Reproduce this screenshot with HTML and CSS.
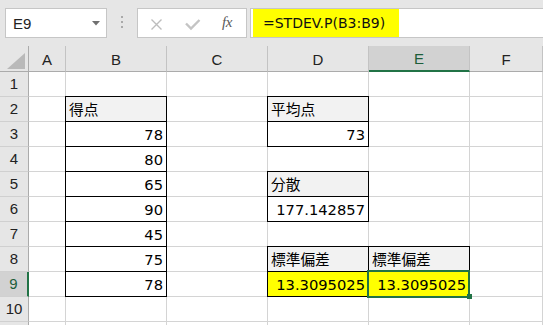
FILE: index.html
```html
<!DOCTYPE html>
<html lang="ja">
<head>
<meta charset="utf-8">
<title>STDEV.P</title>
<link rel="stylesheet" href="styles.css">
</head>
<body>
<div class="bar">
  <div class="namebox"><span class="ref">E9</span><svg class="drop" width="8" height="5" viewBox="0 0 8 5"><path d="M0 0H8L4 4.5Z" fill="#707070"/></svg></div>
  <div class="grip"><i></i><i></i><i></i></div>
  <div class="btns">
    <svg class="ico" width="70" height="28" viewBox="0 0 70 28">
      <path d="M13.5 10.5L23.5 20.5M23.5 10.5L13.5 20.5" stroke="#bdbdbd" stroke-width="1.4" fill="none"/>
      <path d="M48 14.5L53 19.5L61.5 11" stroke="#c4c4c4" stroke-width="2.4" fill="none"/>
    </svg>
    <span class="fx">fx</span>
  </div>
  <div class="formula"><span class="hl">=STDEV.P(B3:B9)</span></div>
</div>

<div class="sheet">
  <div class="corner"><svg width="18" height="16" viewBox="0 0 18 16"><path d="M18 0V16H0Z" fill="#b9b9b9"/></svg></div>
  <div class="ch">A</div><div class="ch">B</div><div class="ch">C</div><div class="ch">D</div><div class="ch csel">E</div><div class="ch">F</div>

  <div class="rh">1</div><div class="c"></div><div class="c"></div><div class="c"></div><div class="c"></div><div class="c"></div><div class="c"></div>
  <div class="rh">2</div><div class="c"></div><div class="c t h">得点</div><div class="c"></div><div class="c t h">平均点</div><div class="c"></div><div class="c"></div>
  <div class="rh">3</div><div class="c"></div><div class="c t r">78</div><div class="c"></div><div class="c t r">73</div><div class="c"></div><div class="c"></div>
  <div class="rh">4</div><div class="c"></div><div class="c t r">80</div><div class="c"></div><div class="c"></div><div class="c"></div><div class="c"></div>
  <div class="rh">5</div><div class="c"></div><div class="c t r">65</div><div class="c"></div><div class="c t h">分散</div><div class="c"></div><div class="c"></div>
  <div class="rh">6</div><div class="c"></div><div class="c t r">90</div><div class="c"></div><div class="c t r">177.142857</div><div class="c"></div><div class="c"></div>
  <div class="rh">7</div><div class="c"></div><div class="c t r">45</div><div class="c"></div><div class="c"></div><div class="c"></div><div class="c"></div>
  <div class="rh">8</div><div class="c"></div><div class="c t r">75</div><div class="c"></div><div class="c t h">標準偏差</div><div class="c t h">標準偏差</div><div class="c"></div>
  <div class="rh rsel">9</div><div class="c"></div><div class="c t r">78</div><div class="c"></div><div class="c t r y">13.3095025</div><div class="c t r y sel">13.3095025<span class="handle"></span></div><div class="c"></div>
  <div class="rh">10</div><div class="c"></div><div class="c"></div><div class="c"></div><div class="c"></div><div class="c"></div><div class="c"></div>
  <div class="rh"></div><div class="c"></div><div class="c"></div><div class="c"></div><div class="c"></div><div class="c"></div><div class="c"></div>
</div>
</body>
</html>
```

FILE: styles.css
```css
html, body {
  margin: 0;
  padding: 0;
}
body {
  width: 543px;
  height: 325px;
  overflow: hidden;
  background: #e6e6e6;
  font-family: "DejaVu Sans", "Noto Sans CJK JP", sans-serif;
  color: #000;
}

/* ---------- formula bar ---------- */
.bar {
  display: flex;
  box-sizing: border-box;
  height: 38px;
  padding-top: 8px;
  border-top: 2px solid #dcdcdc;
  margin-top: -2px;
}
.namebox {
  box-sizing: border-box;
  width: 102px;
  height: 30px;
  margin-left: 5px;
  background: #fff;
  border: 1px solid #c6c6c6;
  display: flex;
  align-items: center;
  justify-content: space-between;
  padding: 0 6px 0 7px;
}
.ref {
  font-family: "Liberation Sans", sans-serif;
  font-size: 15px;
  color: #222;
}
.drop {
  margin-top: 1px;
}
.grip {
  width: 30px;
  display: flex;
  flex-direction: column;
  align-items: center;
  justify-content: center;
  gap: 3px;
}
.grip i {
  display: block;
  width: 2px;
  height: 2px;
  background: #a9a9a9;
}
.btns {
  box-sizing: border-box;
  width: 110px;
  height: 30px;
  background: #fff;
  border: 1px solid #c6c6c6;
  display: flex;
  align-items: flex-start;
}
.ico {
  display: block;
}
.fx {
  margin-left: 14px;
  margin-top: 5px;
  font-family: "Liberation Serif", serif;
  font-style: italic;
  font-size: 15px;
  color: #5a5a5a;
  letter-spacing: -0.5px;
}
.formula {
  flex: 1;
  box-sizing: border-box;
  height: 30px;
  margin-left: 3px;
  background: #fff;
  border: 1px solid #c6c6c6;
  border-right: none;
  padding-left: 2px;
  display: flex;
}
.hl {
  background: #ffff00;
  height: 28px;
  padding: 0 14px 0 10px;
  display: flex;
  align-items: center;
  font-size: 14px;
  color: #111;
}

/* ---------- sheet ---------- */
.sheet {
  margin-top: 10px;
  display: grid;
  grid-template-columns: 29px 37px 101px 101px 101px 101px 1fr;
  grid-template-rows: 26px repeat(11, 25px);
  font-size: 14.7px;
}
.sheet > div {
  box-sizing: border-box;
}
.corner {
  border-right: 1px solid #ababab;
  border-bottom: 1px solid #ababab;
  display: flex;
  align-items: flex-end;
  justify-content: flex-end;
  padding: 0 3px 2px 0;
}
.corner svg {
  display: block;
}
.ch {
  border-right: 1px solid #c3c3c3;
  border-bottom: 1px solid #ababab;
  display: flex;
  align-items: center;
  justify-content: center;
  font-family: "Liberation Sans", sans-serif;
  font-size: 15px;
  color: #222;
  padding-top: 1px;
}
.ch.csel {
  background: #d2d2d2;
  border-bottom: 2px solid #217346;
  color: #1d5e3a;
}
.rh {
  border-right: 1px solid #ababab;
  border-bottom: 1px solid #d0d0d0;
  display: flex;
  align-items: flex-end;
  justify-content: center;
  font-family: "Liberation Sans", sans-serif;
  font-size: 15px;
  line-height: 18px;
  padding-bottom: 3px;
  color: #222;
}
.rh.rsel {
  background: #d2d2d2;
  border-right: 2px solid #217346;
  color: #1d5e3a;
}
.c {
  background: #fff;
  border-right: 1px solid #d4d4d4;
  border-bottom: 1px solid #d4d4d4;
  display: flex;
  align-items: flex-end;
  padding: 0 3px 2px 3px;
  line-height: 18px;
  white-space: nowrap;
}
.c.r {
  justify-content: flex-end;
}
.c.h {
  background: #f2f2f2;
}
.c.y {
  background: #ffff00;
}
.c.t {
  position: relative;
}
.c.t::before {
  content: "";
  position: absolute;
  left: -1px;
  top: -1px;
  right: -1px;
  bottom: -1px;
  border: 1px solid #000;
  pointer-events: none;
}
.c.sel::after {
  content: "";
  position: absolute;
  left: -2px;
  top: -2px;
  right: -1px;
  bottom: -2px;
  border: 2px solid #217346;
  pointer-events: none;
}
.handle {
  position: absolute;
  right: -3px;
  bottom: -3px;
  width: 5px;
  height: 5px;
  background: #217346;
  z-index: 1;
}
```
